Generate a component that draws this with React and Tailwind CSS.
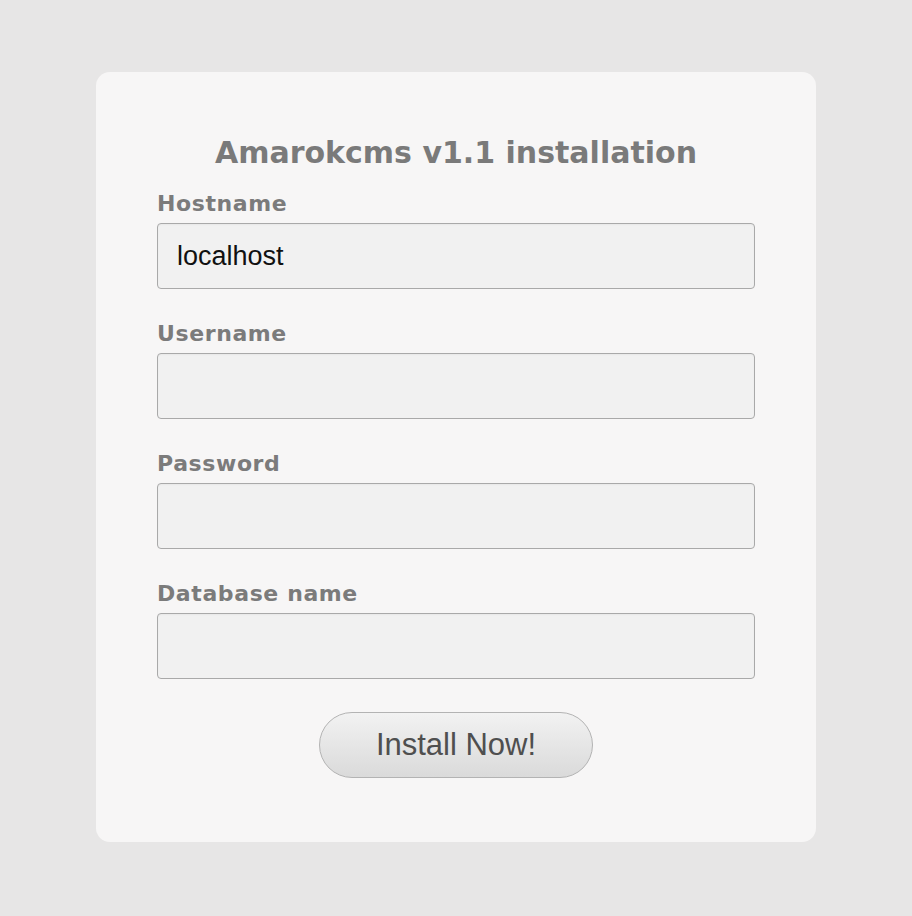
import React from 'react';

const fields = [
    { label: 'Hostname', value: 'localhost' },
    { label: 'Username', value: '' },
    { label: 'Password', value: '' },
    { label: 'Database name', value: '' },
];

const App = () => {
    return (
        <div className="min-h-[916px] w-full bg-[#e7e6e6] pt-[72px] pb-[74px]">
            <div className="ml-[96px] w-[720px] h-[770px] rounded-[14px] bg-[#f7f6f6] px-[61px] pt-[61px]">
                <h1 className="text-center text-[30px] font-bold leading-[40px] text-[#7a7a7a] font-['DejaVu_Sans',Verdana,sans-serif]">
                    Amarokcms v1.1 installation
                </h1>
                <div className="mt-[17px] flex flex-col gap-[31px]">
                    {fields.map((f) => (
                        <div key={f.label} className="flex flex-col">
                            <label className="text-[22px] font-bold leading-[28px] text-[#7b7b7b] font-['DejaVu_Sans',Verdana,sans-serif] tracking-[0.6px]">
                                {f.label}
                            </label>
                            <input
                                type="text"
                                defaultValue={f.value}
                                className="mt-[5px] h-[66px] w-[598px] rounded-[4px] border border-[#a9a9a9] bg-[#f1f1f1] px-[19px] text-[27px] text-[#111] font-['Liberation_Sans',Arial,sans-serif] outline-none shadow-[inset_0_1px_2px_rgba(0,0,0,0.04)]"
                            />
                        </div>
                    ))}
                </div>
                <div className="mt-[33px] flex justify-center">
                    <button className="h-[66px] w-[274px] rounded-full border border-[#b3b3b3] bg-gradient-to-b from-[#f2f2f2] to-[#dadada] text-[31px] text-[#4f4f4f] font-['Liberation_Sans',Arial,sans-serif]">
                        Install Now!
                    </button>
                </div>
            </div>
        </div>
    );
};

export default App;
